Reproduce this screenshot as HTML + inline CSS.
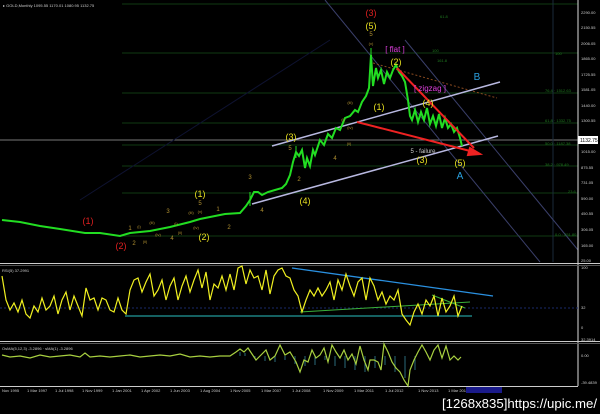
<!DOCTYPE html>
<html><head><meta charset="utf-8"><style>
html,body{margin:0;padding:0;background:#000;width:600px;height:414px;overflow:hidden}
svg{display:block}
text{font-family:"Liberation Sans",sans-serif}
</style></head><body>
<svg width="600" height="414" viewBox="0 0 600 414" xmlns="http://www.w3.org/2000/svg">
<rect width="600" height="414" fill="#000"/>
<g stroke="#0f3a12" stroke-width="1">
<line x1="122" y1="4" x2="578" y2="4"/>
<line x1="122" y1="53" x2="578" y2="53"/>
<line x1="122" y1="93" x2="578" y2="93"/>
<line x1="122" y1="123" x2="578" y2="123"/>
<line x1="122" y1="145" x2="578" y2="145"/>
<line x1="122" y1="166" x2="578" y2="166"/>
<line x1="122" y1="193" x2="578" y2="193"/>
<line x1="122" y1="236" x2="578" y2="236"/>
</g>
<line x1="0" y1="140" x2="578" y2="140" stroke="#777" stroke-width="1"/>
<line x1="553" y1="0" x2="553" y2="262" stroke="#1a2a3a" stroke-width="1"/>
<line x1="325" y1="0" x2="540" y2="262" stroke="#3a3f6a" stroke-width="1"/>
<line x1="405" y1="40" x2="578" y2="250" stroke="#3a3f6a" stroke-width="1"/>
<line x1="80" y1="200" x2="330" y2="40" stroke="#0e1230" stroke-width="1"/>
<line x1="373" y1="63" x2="497" y2="98" stroke="#8a4a20" stroke-width="1" stroke-dasharray="2,2"/>
<line x1="272" y1="146" x2="500" y2="82" stroke="#b8b8e0" stroke-width="1.5"/>
<line x1="252" y1="204" x2="498" y2="136" stroke="#b8b8e0" stroke-width="1.5"/>
<polyline fill="none" stroke="#22dd22" stroke-width="2" points="2,220 20,222 40,226 60,229 85,233 100,233 120,236 130,233 150,231 170,227 190,222 200,219 215,216 225,214 240,213 246,206 250,200 254,192 258,192 262,195 268,192 275,190 282,188 286,184 290,175 293,162 296,152 299,156 302,150 305,168 307,158 310,166 313,150 315,155 320,140 324,145 328,134 332,138 336,128 340,130 345,118 350,116 355,110 358,112 362,102 366,96 369,88 371,55 373,86 376,68 378,78 381,70 384,84 387,72 390,78 393,70 396,65 399,72 402,76 405,82 408,100 410,116 412,120 415,110 418,122 421,112 424,120 427,108 430,124 433,116 436,126 439,114 442,128 445,118 448,128 451,124 454,132 457,128 460,138 462,146"/>
<g stroke="#22dd22" stroke-width="1">
<line x1="371" y1="48" x2="371" y2="60"/><line x1="296" y1="146" x2="296" y2="158"/><line x1="250" y1="192" x2="250" y2="206"/>
</g>
<g stroke="#ee2222" stroke-width="2" fill="#ee2222">
<line x1="357" y1="122" x2="474" y2="152"/>
<line x1="397" y1="68" x2="474" y2="148"/>
<polygon points="480,154 470,148 468,155"/>
</g>
<g fill="#1f7a1f" font-size="4">
<text x="440" y="18">61.8</text><text x="432" y="52">100</text><text x="437" y="62">161.8</text><text x="555" y="55">100</text>
<text x="545" y="92">76.4 · 1512.63</text><text x="545" y="122">61.8 · 1332.75</text><text x="545" y="145">50.0 · 1187.38</text>
<text x="545" y="166">38.2 · 978.49</text><text x="568" y="193">23.6</text><text x="555" y="236">0.0 · 251.80</text>
</g>
<g font-size="9" text-anchor="middle">
<text x="88" y="224" fill="#e02020">(1)</text>
<text x="121" y="249" fill="#e02020">(2)</text>
<text x="371" y="16" fill="#e02020">(3)</text>
<g fill="#e8e020">
<text x="200" y="197">(1)</text><text x="204" y="240">(2)</text><text x="291" y="140">(3)</text><text x="305" y="204">(4)</text>
<text x="371" y="29">(5)</text><text x="396" y="65">(2)</text><text x="379" y="110">(1)</text><text x="428" y="106">(4)</text>
<text x="422" y="163">(3)</text><text x="460" y="166">(5)</text>
</g>
</g>
<g font-size="6" fill="#b09030" text-anchor="middle">
<text x="130" y="230">1</text><text x="134" y="245">2</text><text x="168" y="213">3</text><text x="172" y="240">4</text><text x="200" y="205">5</text>
<text x="218" y="211">1</text><text x="229" y="229">2</text><text x="250" y="179">3</text><text x="262" y="212">4</text><text x="290" y="150">5</text>
<text x="299" y="181">2</text><text x="335" y="160">4</text><text x="371" y="36">5</text>
</g>
<g font-size="4" fill="#b09030" text-anchor="middle">
<text x="139" y="228">(i)</text><text x="145" y="243">(ii)</text><text x="152" y="224">(iii)</text><text x="158" y="236">(iv)</text><text x="176" y="225">(i)</text>
<text x="180" y="234">(ii)</text><text x="191" y="214">(iii)</text><text x="200" y="213">(v)</text><text x="196" y="229">(iv)</text>
<text x="371" y="45">(v)</text><text x="350" y="104">(iii)</text><text x="343" y="121">(i)</text><text x="350" y="129">(iv)</text><text x="349" y="145">(ii)</text>
</g>
<g font-size="8" text-anchor="middle">
<text x="395" y="52" fill="#e040e0">[ flat ]</text>
<text x="430" y="91" fill="#e040e0">[ zigzag ]</text>
<text x="477" y="80" fill="#2aa0e0" font-size="10">B</text>
<text x="460" y="179" fill="#2aa0e0" font-size="10">A</text>
<text x="423" y="153" fill="#cccccc" font-size="6">5 - failure</text>
</g>
<text x="3" y="7" fill="#ccc" font-size="4">▸ GOLD,Monthly  1095.55 1170.01 1080.95 1132.75</text>
<line x1="578" y1="0" x2="578" y2="386" stroke="#ddd" stroke-width="1"/>
<g fill="#ccc" font-size="4">
<text x="581" y="14">2290.00</text><text x="581" y="29">2150.55</text><text x="581" y="45">2006.05</text><text x="581" y="60">1865.00</text>
<text x="581" y="76">1725.55</text><text x="581" y="91">1581.05</text><text x="581" y="107">1440.00</text><text x="581" y="122">1300.55</text>
<text x="581" y="153">1015.00</text><text x="581" y="169">875.55</text><text x="581" y="184">731.05</text><text x="581" y="200">590.00</text>
<text x="581" y="215">450.55</text><text x="581" y="231">306.05</text><text x="581" y="247">165.00</text><text x="581" y="262">25.00</text>
<text x="581" y="269">100</text><text x="581" y="309">32</text><text x="581" y="329">0</text>
<text x="581" y="341">32.3914</text><text x="581" y="357">0.00</text><text x="581" y="384">-39.4839</text>
</g>
<rect x="578" y="136" width="20" height="8" fill="#fff"/>
<text x="580" y="142" fill="#000" font-size="5">1132.75</text>
<line x1="0" y1="263.5" x2="600" y2="263.5" stroke="#ccc"/>
<line x1="0" y1="265.5" x2="600" y2="265.5" stroke="#555"/>
<line x1="0" y1="341.5" x2="600" y2="341.5" stroke="#ccc"/>
<line x1="0" y1="343.5" x2="600" y2="343.5" stroke="#555"/>
<line x1="0" y1="386.5" x2="578" y2="386.5" stroke="#ccc"/>
<text x="2" y="272" fill="#ccc" font-size="4">RSI(5) 37.2991</text>
<line x1="0" y1="308" x2="578" y2="308" stroke="#1a2a6a" stroke-dasharray="2,2"/>
<line x1="125" y1="316" x2="472" y2="316" stroke="#2ac0c0" stroke-width="1"/>
<line x1="292" y1="268" x2="493" y2="296" stroke="#2a90e0" stroke-width="1.3"/>
<line x1="300" y1="312" x2="470" y2="302" stroke="#3ab03a" stroke-width="1"/>
<line x1="432" y1="295" x2="465" y2="308" stroke="#3ab03a" stroke-width="1"/>
<polyline fill="none" stroke="#f0f020" stroke-width="1.2" points="2,276 6,300 10,310 14,303 18,312 22,300 26,314 30,318 34,306 38,312 42,298 46,310 50,306 54,296 58,314 62,300 66,292 70,310 74,296 78,306 82,316 86,288 90,300 94,298 98,310 102,298 106,300 110,310 114,312 118,298 122,310 126,314 130,290 134,280 138,278 142,292 146,282 150,274 154,296 158,290 162,280 166,300 170,286 174,278 178,300 182,286 186,276 190,292 194,280 198,270 202,288 206,272 210,300 214,284 218,288 222,276 226,290 230,274 234,290 238,268 242,266 246,284 250,270 254,278 258,276 262,290 266,270 270,294 274,276 278,270 282,268 286,276 290,278 294,290 298,296 302,312 306,300 310,290 314,296 318,288 322,296 326,290 330,282 334,300 338,280 342,290 346,274 350,286 354,296 358,282 362,278 366,300 370,278 374,286 378,300 382,292 386,304 390,296 394,300 398,290 402,314 406,320 410,325 414,312 418,304 422,314 426,300 430,306 434,296 438,316 442,298 446,312 450,306 454,296 458,316 462,306"/>
<text x="2" y="350" fill="#ccc" font-size="4">OsMA(5,12,3) -3.2896 · sMA(1) -3.2896</text>
<path d="M240,356 V352 M245,356 V353 M255,356 V358 M265,356 V361 M275,356 V362 M285,356 V360 M295,356 V364 M305,356 V366 M315,356 V365 M325,356 V360 M335,356 V366 M345,356 V368 M355,356 V370 M365,356 V372 M375,356 V368 M385,356 V365 M395,356 V372 M405,356 V378 M415,356 V370" stroke="#2a6a7a" stroke-width="1"/>
<polyline fill="none" stroke="#a8d040" stroke-width="1.2" points="2,355 10,357 20,356 30,358 40,355 50,357 60,356 70,355 80,357 85,353 90,357 100,356 110,357 120,356 130,355 140,357 150,356 160,355 170,356 180,354 190,357 200,356 210,357 220,356 230,356 236,352 240,349 244,352 248,348 252,354 256,360 260,356 266,350 270,360 275,356 280,345 285,355 290,352 296,362 300,372 304,360 308,362 312,350 316,358 320,355 324,348 328,362 332,345 336,352 340,358 344,350 348,360 352,354 356,364 360,346 364,360 368,370 370,360 374,360 378,362 381,370 384,344 388,352 392,362 396,368 400,372 404,380 408,386 410,370 414,360 418,352 422,345 426,352 430,360 434,350 438,345 442,358 446,346 450,360 454,356 458,360 461,357"/>
<g fill="#ccc" font-size="4">
<text x="2" y="392">Nov 1995</text><text x="27" y="392">1 Mar 1997</text><text x="55" y="392">1 Jul 1998</text><text x="82" y="392">1 Nov 1999</text>
<text x="112" y="392">1 Jan 2001</text><text x="141" y="392">1 Apr 2002</text><text x="170" y="392">1 Jun 2003</text><text x="200" y="392">1 Aug 2004</text>
<text x="230" y="392">1 Nov 2005</text><text x="261" y="392">1 Mar 2007</text><text x="292" y="392">1 Jul 2008</text><text x="323" y="392">1 Nov 2009</text>
<text x="354" y="392">1 Mar 2011</text><text x="385" y="392">1 Jul 2012</text><text x="418" y="392">1 Nov 2013</text><text x="448" y="392">1 Mar 2015</text>
</g>
<rect x="466" y="387" width="36" height="6" fill="#1a1a8a"/>
<text x="597" y="408" fill="#fff" font-size="13" text-anchor="end" textLength="155" lengthAdjust="spacingAndGlyphs" font-family="Liberation Sans Narrow, Liberation Sans, sans-serif">[1268x835]https://upic.me/</text>
</svg>
</body></html>
